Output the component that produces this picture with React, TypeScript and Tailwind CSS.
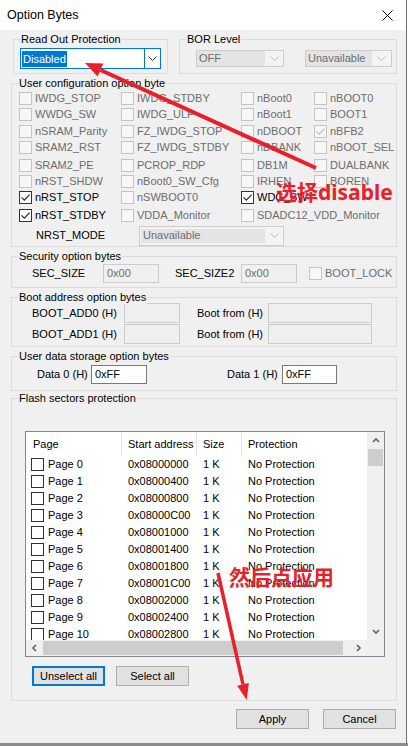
import React from "react";

type Cell = { t: string; c?: boolean; e?: boolean } | null;

const GRID: Cell[][] = [
  [{ t: "IWDG_STOP" }, { t: "IWDG_STDBY" }, { t: "nBoot0" }, { t: "nBOOT0" }],
  [{ t: "WWDG_SW" }, { t: "IWDG_ULP" }, { t: "nBoot1" }, { t: "BOOT1" }],
  [{ t: "nSRAM_Parity" }, { t: "FZ_IWDG_STOP" }, { t: "nDBOOT" }, { t: "nBFB2", c: true }],
  [{ t: "SRAM2_RST" }, { t: "FZ_IWDG_STDBY" }, { t: "nDBANK" }, { t: "nBOOT_SEL" }],
  [{ t: "SRAM2_PE" }, { t: "PCROP_RDP" }, { t: "DB1M" }, { t: "DUALBANK" }],
  [{ t: "nRST_SHDW" }, { t: "nBoot0_SW_Cfg" }, { t: "IRHEN" }, { t: "BOREN" }],
  [{ t: "nRST_STOP", c: true, e: true }, { t: "nSWBOOT0" }, { t: "WDG_SW", c: true, e: true }, null],
  [{ t: "nRST_STDBY", c: true, e: true }, { t: "VDDA_Monitor" }, { t: "SDADC12_VDD_Monitor" }, null],
];

const ROW_MT = ["mt-[0px]", "mt-[0px]", "mt-[0.9px]", "mt-[0px]", "mt-[1.6px]", "mt-[0px]", "mt-[0.7px]", "mt-[1.3px]"];

const PAGES = Array.from({ length: 11 }, (_, i) => ({
  name: `Page ${i}`,
  addr: "0x" + (0x08000000 + i * 0x400).toString(16).toUpperCase().padStart(8, "0"),
}));

function Box({ checked = false, enabled = false }: { checked?: boolean; enabled?: boolean }) {
  return (
    <span
      className={
        enabled
          ? "relative block w-[13px] h-[13px] shrink-0 border border-[#333333] bg-white"
          : "relative block w-[13px] h-[13px] shrink-0 border border-[#c3c3c3] bg-[#f7f7f7]"
      }
    >
      {checked && (
        <svg className="absolute left-0 top-0" width="11" height="11" viewBox="0 0 11 11">
          <path d="M1.6 5.4 L4.3 8.1 L9.6 2.6" fill="none" stroke={enabled ? "#222222" : "#b8b8b8"} strokeWidth="1.1" />
        </svg>
      )}
    </span>
  );
}

function ChevDown({ color }: { color: string }) {
  return (
    <svg width="9" height="5" viewBox="0 0 9 5">
      <path d="M0.5 0.5 L4.5 4.5 L8.5 0.5" fill="none" stroke={color} strokeWidth="1" />
    </svg>
  );
}

function ScrollArrow({ dir }: { dir: "up" | "down" | "left" | "right" }) {
  const d =
    dir === "up"
      ? "M1 5 L4 2 L7 5"
      : dir === "down"
      ? "M1 2 L4 5 L7 2"
      : dir === "left"
      ? "M5 1 L2 4 L5 7"
      : "M2 1 L5 4 L2 7";
  return (
    <svg width="8" height="8" viewBox="0 0 8 8">
      <path d={d} fill="none" stroke="#606060" strokeWidth="1.6" />
    </svg>
  );
}

function Group({ label, className, children }: { label: string; className: string; children?: React.ReactNode }) {
  return (
    <div className={"relative shrink-0 border border-[#dcdcdc] " + className}>
      <span className="absolute left-[6px] top-[-7px] bg-[#f0f0f0] px-[1px] leading-[13px] whitespace-nowrap">{label}</span>
      {children}
    </div>
  );
}

function DisCombo({ outer, fill, text }: { outer: string; fill: string; text: string }) {
  return (
    <div className={"flex shrink-0 border border-[#cccccc] bg-[#f4f4f4] " + outer}>
      <div className={"flex items-center pl-[2px] bg-[#e4e4e4] text-[#6d6d6d] whitespace-nowrap overflow-hidden " + fill}>{text}</div>
      <div className="flex flex-1 items-center justify-center">
        <ChevDown color="#bdbdbd" />
      </div>
    </div>
  );
}

function Edit({ cls, text = "", enabled = false }: { cls: string; text?: string; enabled?: boolean }) {
  return (
    <div
      className={
        (enabled ? "border-[#7a7a7a] bg-white text-black " : "border-[#cccccc] bg-[#f0f0f0] text-[#6d6d6d] ") +
        "flex items-center shrink-0 border pl-[3px] " +
        cls
      }
    >
      {text}
    </div>
  );
}

function Btn({ label, focus = false, cls = "" }: { label: string; focus?: boolean; cls?: string }) {
  return (
    <div
      className={
        (focus ? "border-2 border-[#0078d7] " : "border border-[#adadad] ") +
        "flex items-center justify-center shrink-0 w-[73px] h-[20px] bg-[#e1e1e1] " +
        cls
      }
    >
      {label}
    </div>
  );
}

function ListView() {
  return (
    <div className="flex ml-[13px] mt-[32px] w-[360px] h-[226px] border border-[#828790] bg-white">
      <div className="flex flex-col w-[341px]">
        <div className="h-[208px] overflow-hidden">
          <div className="flex h-[24px]">
            <div className="flex items-center w-[95px] pl-[7px]">Page</div>
            <div className="w-[1px] bg-[#e5e5e5]" />
            <div className="flex items-center w-[74px] pl-[6px] whitespace-nowrap">Start address</div>
            <div className="w-[1px] bg-[#e5e5e5]" />
            <div className="flex items-center w-[44px] pl-[6px]">Size</div>
            <div className="w-[1px] bg-[#e5e5e5]" />
            <div className="flex items-center flex-1 pl-[6px]">Protection</div>
          </div>
          {PAGES.map((p) => (
            <div key={p.name} className="flex items-center h-[17px] whitespace-nowrap">
              <div className="flex items-center gap-[4px] w-[96px] pl-[5px]">
                <Box enabled />
                <span>{p.name}</span>
              </div>
              <div className="w-[75px] pl-[6px]">{p.addr}</div>
              <div className="w-[45px] pl-[6px]">1 K</div>
              <div className="flex-1 pl-[6px]">No Protection</div>
            </div>
          ))}
        </div>
        <div className="flex h-[16px] bg-[#f0f0f0] py-[1px]">
          <div className="flex items-center justify-center w-[17px]">
            <ScrollArrow dir="left" />
          </div>
          <div className="w-[300px] bg-[#cdcdcd]" />
          <div className="flex-1" />
          <div className="flex items-center justify-center w-[17px]">
            <ScrollArrow dir="right" />
          </div>
        </div>
      </div>
      <div className="flex flex-col w-[17px] bg-[#f0f0f0]">
        <div className="flex flex-col h-[208px]">
          <div className="flex items-center justify-center h-[17px]">
            <ScrollArrow dir="up" />
          </div>
          <div className="h-[17px] mx-[1px] bg-[#cdcdcd]" />
          <div className="flex-1" />
          <div className="flex items-center justify-center h-[17px]">
            <ScrollArrow dir="down" />
          </div>
        </div>
        <div className="h-[16px]" />
      </div>
    </div>
  );
}

function Body() {
  return (
    <div className="flex flex-col flex-1 text-black">
      {/* top row */}
      <div className="flex mt-[9px] pl-[13px]">
        <Group label="Read Out Protection" className="w-[155px] h-[35px]">
          <div className="pl-[6px] pt-[8px]">
            <div className="flex w-[141px] h-[21px] border border-[#0078d7] bg-white">
              <div className="flex flex-1 items-center pl-[1px]">
                <span className="bg-[#0078d7] text-white px-[1px] leading-[16px] h-[16px]">Disabled</span>
              </div>
              <div className="flex items-center justify-center w-[16px] border-l border-[#0078d7]">
                <ChevDown color="#333333" />
              </div>
            </div>
          </div>
        </Group>
        <Group label="BOR Level" className="ml-[11px] w-[218px] h-[35px]">
          <div className="flex pl-[16px] pt-[10px]">
            <DisCombo outer="w-[88px] h-[17px]" fill="w-[68px]" text="OFF" />
            <DisCombo outer="ml-[21px] w-[87px] h-[17px]" fill="w-[66px]" text="Unavailable" />
          </div>
        </Group>
      </div>

      {/* user configuration */}
      <Group label="User configuration option byte" className="mt-[9px] ml-[11px] w-[386px] h-[164px]">
        <div className="flex flex-col pt-[6.8px]">
          {GRID.map((row, ri) => (
            <div key={ri} className={"grid grid-cols-[102px_120px_73px_80px] items-center h-[16px] pl-[7px] " + ROW_MT[ri]}>
              {row.map((cell, ci) =>
                cell ? (
                  <div key={ci} className="flex items-center gap-[3px] whitespace-nowrap">
                    <Box checked={!!cell.c} enabled={!!cell.e} />
                    <span className={cell.e ? "text-black" : "text-[#6d6d6d]"}>{cell.t}</span>
                  </div>
                ) : (
                  <div key={ci} />
                )
              )}
            </div>
          ))}
          <div className="flex items-center h-[20px] mt-[2.4px]">
            <div className="pl-[24px] w-[127px] whitespace-nowrap">NRST_MODE</div>
            <DisCombo outer="w-[145px] h-[20px]" fill="w-[124px] ml-[1px] my-[2px]" text="Unavailable" />
          </div>
        </div>
      </Group>

      {/* security */}
      <Group label="Security option bytes" className="mt-[9px] ml-[11px] w-[386px] h-[32px]">
        <div className="flex items-center pt-[7px] whitespace-nowrap">
          <div className="pl-[20px] w-[91px]">SEC_SIZE</div>
          <Edit cls="w-[56px] h-[19px]" text="0x00" />
          <div className="ml-[16px] w-[66px]">SEC_SIZE2</div>
          <Edit cls="w-[56px] h-[19px]" text="0x00" />
          <div className="flex items-center gap-[3px] ml-[12px]">
            <Box />
            <span className="text-[#6d6d6d]">BOOT_LOCK</span>
          </div>
        </div>
      </Group>

      {/* boot address */}
      <Group label="Boot address option bytes" className="mt-[9px] ml-[11px] w-[386px] h-[50px]">
        <div className="flex flex-col pt-[5px] whitespace-nowrap">
          <div className="flex items-center h-[20px]">
            <div className="pl-[20px] w-[112px]">BOOT_ADD0 (H)</div>
            <Edit cls="w-[56px] h-[20px]" />
            <div className="ml-[17px] w-[71px]">Boot from (H)</div>
            <Edit cls="w-[104px] h-[20px]" />
          </div>
          <div className="flex items-center h-[20px] mt-[1px]">
            <div className="pl-[20px] w-[112px]">BOOT_ADD1 (H)</div>
            <Edit cls="w-[56px] h-[20px]" />
            <div className="ml-[17px] w-[71px]">Boot from (H)</div>
            <Edit cls="w-[104px] h-[20px]" />
          </div>
        </div>
      </Group>

      {/* user data */}
      <Group label="User data storage option bytes" className="mt-[9px] ml-[11px] w-[386px] h-[35px]">
        <div className="flex items-center pt-[8px] whitespace-nowrap">
          <div className="pl-[25px] w-[79px]">Data 0 (H)</div>
          <Edit cls="w-[56px] h-[19px]" text="0xFF" enabled />
          <div className="ml-[80px] w-[55px]">Data 1 (H)</div>
          <Edit cls="w-[55px] h-[19px]" text="0xFF" enabled />
        </div>
      </Group>

      {/* flash sectors */}
      <Group label="Flash sectors protection" className="mt-[7px] ml-[11px] w-[386px] h-[303px]">
        <ListView />
        <div className="flex mt-[9px] ml-[20px]">
          <Btn label="Unselect all" focus />
          <Btn label="Select all" cls="ml-[11px]" />
        </div>
      </Group>

      <div className="flex justify-end gap-[14px] mt-[8px] pr-[10px]">
        <Btn label="Apply" />
        <Btn label="Cancel" />
      </div>
    </div>
  );
}

export default function App() {
  return (
    <div className="relative w-[408px] h-[746px] overflow-hidden bg-[#8c8c8c] font-['Liberation_Sans',Arial,sans-serif] text-[11px] leading-[13px] text-black">
      <div className="flex h-[743px]">
        <div className="flex flex-col w-[407px] h-full bg-[#f0f0f0] border-r border-[#707070]">
          <div className="flex items-center justify-between h-[30px] shrink-0 bg-white pl-[7px] pr-[13px]">
            <span className="text-[12.5px] leading-[15px] text-black">Option Bytes</span>
            <svg width="11" height="11" viewBox="0 0 11 11">
              <path d="M0.5 0.5 L10.5 10.5 M10.5 0.5 L0.5 10.5" stroke="#000000" strokeWidth="1" />
            </svg>
          </div>
          <Body />
        </div>
        <div className="flex-1 bg-white" />
      </div>

      {/* annotations */}
      <svg className="absolute left-0 top-0 pointer-events-none" width="408" height="746" viewBox="0 0 408 746">
        <line x1="316" y1="168" x2="100.5" y2="70" stroke="#e8202a" strokeWidth="4" />
        <polygon points="85,63 103.4,63.6 97.6,76.4" fill="#e8202a" />
        <line x1="218" y1="573" x2="243" y2="684.4" stroke="#e8202a" strokeWidth="3.5" />
        <polygon points="246.7,700 248.9,683 237.2,685.8" fill="#e8202a" />
      </svg>
      <span className="absolute left-[276px] top-[182px] whitespace-nowrap font-['Noto_Sans','Noto_Sans_CJK_SC',sans-serif] font-bold text-[21px] leading-[21px] text-[#e8202a]">
        选择disable
      </span>
      <span className="absolute left-[229px] top-[567px] whitespace-nowrap font-['Noto_Sans','Noto_Sans_CJK_SC',sans-serif] font-bold text-[21px] leading-[21px] text-[#e8202a]">
        然后点应用
      </span>
    </div>
  );
}
